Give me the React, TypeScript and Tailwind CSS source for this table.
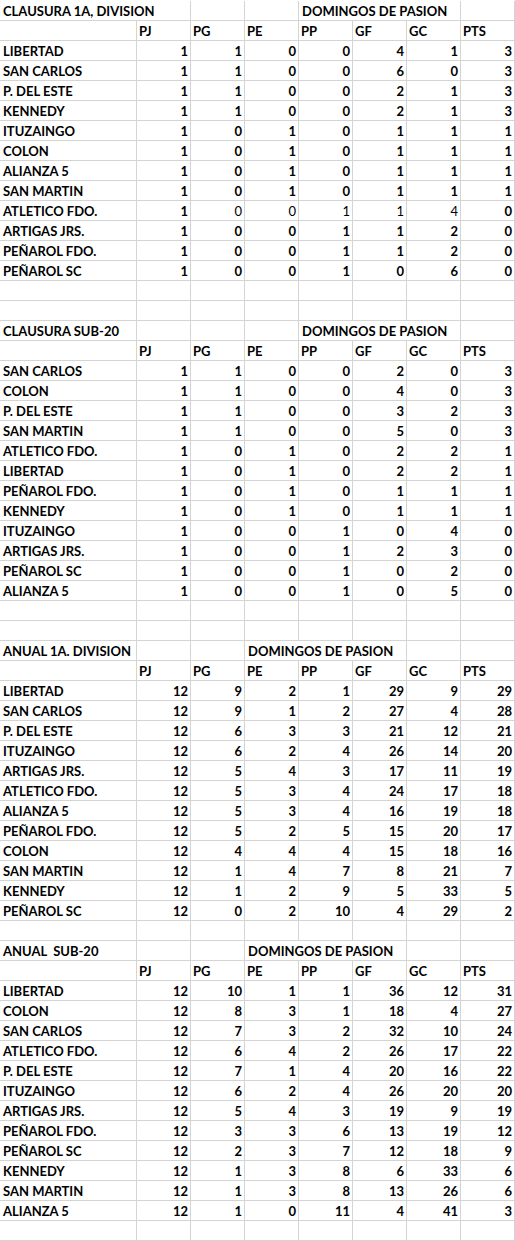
import React from "react";

type TeamRow = { name: string; v: number[]; light?: number[] };

const t1: TeamRow[] = [
  { name: "LIBERTAD", v: [1, 1, 0, 0, 4, 1, 3] },
  { name: "SAN CARLOS", v: [1, 1, 0, 0, 6, 0, 3] },
  { name: "P. DEL ESTE", v: [1, 1, 0, 0, 2, 1, 3] },
  { name: "KENNEDY", v: [1, 1, 0, 0, 2, 1, 3] },
  { name: "ITUZAINGO", v: [1, 0, 1, 0, 1, 1, 1] },
  { name: "COLON", v: [1, 0, 1, 0, 1, 1, 1] },
  { name: "ALIANZA 5", v: [1, 0, 1, 0, 1, 1, 1] },
  { name: "SAN MARTIN", v: [1, 0, 1, 0, 1, 1, 1] },
  { name: "ATLETICO FDO.", v: [1, 0, 0, 1, 1, 4, 0], light: [1, 2, 3, 4, 5] },
  { name: "ARTIGAS JRS.", v: [1, 0, 0, 1, 1, 2, 0] },
  { name: "PEÑAROL FDO.", v: [1, 0, 0, 1, 1, 2, 0] },
  { name: "PEÑAROL SC", v: [1, 0, 0, 1, 0, 6, 0] },
];

const t2: TeamRow[] = [
  { name: "SAN CARLOS", v: [1, 1, 0, 0, 2, 0, 3] },
  { name: "COLON", v: [1, 1, 0, 0, 4, 0, 3] },
  { name: "P. DEL ESTE", v: [1, 1, 0, 0, 3, 2, 3] },
  { name: "SAN MARTIN", v: [1, 1, 0, 0, 5, 0, 3] },
  { name: "ATLETICO FDO.", v: [1, 0, 1, 0, 2, 2, 1] },
  { name: "LIBERTAD", v: [1, 0, 1, 0, 2, 2, 1] },
  { name: "PEÑAROL FDO.", v: [1, 0, 1, 0, 1, 1, 1] },
  { name: "KENNEDY", v: [1, 0, 1, 0, 1, 1, 1] },
  { name: "ITUZAINGO", v: [1, 0, 0, 1, 0, 4, 0] },
  { name: "ARTIGAS JRS.", v: [1, 0, 0, 1, 2, 3, 0] },
  { name: "PEÑAROL SC", v: [1, 0, 0, 1, 0, 2, 0] },
  { name: "ALIANZA 5", v: [1, 0, 0, 1, 0, 5, 0] },
];

const t3: TeamRow[] = [
  { name: "LIBERTAD", v: [12, 9, 2, 1, 29, 9, 29] },
  { name: "SAN CARLOS", v: [12, 9, 1, 2, 27, 4, 28] },
  { name: "P. DEL ESTE", v: [12, 6, 3, 3, 21, 12, 21] },
  { name: "ITUZAINGO", v: [12, 6, 2, 4, 26, 14, 20] },
  { name: "ARTIGAS JRS.", v: [12, 5, 4, 3, 17, 11, 19] },
  { name: "ATLETICO FDO.", v: [12, 5, 3, 4, 24, 17, 18] },
  { name: "ALIANZA 5", v: [12, 5, 3, 4, 16, 19, 18] },
  { name: "PEÑAROL FDO.", v: [12, 5, 2, 5, 15, 20, 17] },
  { name: "COLON", v: [12, 4, 4, 4, 15, 18, 16] },
  { name: "SAN MARTIN", v: [12, 1, 4, 7, 8, 21, 7] },
  { name: "KENNEDY", v: [12, 1, 2, 9, 5, 33, 5] },
  { name: "PEÑAROL SC", v: [12, 0, 2, 10, 4, 29, 2] },
];

const t4: TeamRow[] = [
  { name: "LIBERTAD", v: [12, 10, 1, 1, 36, 12, 31] },
  { name: "COLON", v: [12, 8, 3, 1, 18, 4, 27] },
  { name: "SAN CARLOS", v: [12, 7, 3, 2, 32, 10, 24] },
  { name: "ATLETICO FDO.", v: [12, 6, 4, 2, 26, 17, 22] },
  { name: "P. DEL ESTE", v: [12, 7, 1, 4, 20, 16, 22] },
  { name: "ITUZAINGO", v: [12, 6, 2, 4, 26, 20, 20] },
  { name: "ARTIGAS JRS.", v: [12, 5, 4, 3, 19, 9, 19] },
  { name: "PEÑAROL FDO.", v: [12, 3, 3, 6, 13, 19, 12] },
  { name: "PEÑAROL SC", v: [12, 2, 3, 7, 12, 18, 9] },
  { name: "KENNEDY", v: [12, 1, 3, 8, 6, 33, 6] },
  { name: "SAN MARTIN", v: [12, 1, 3, 8, 13, 26, 6] },
  { name: "ALIANZA 5", v: [12, 1, 0, 11, 4, 41, 3] },
];

const heads = ["PJ", "PG", "PE", "PP", "GF", "GC", "PTS"];

const cell =
  "h-[20px] border-r border-b border-[#d4d4d4] whitespace-pre overflow-visible leading-[19px] pt-[1px]";

function Cell({
  children,
  className = "",
}: {
  children?: React.ReactNode;
  className?: string;
}) {
  return <div className={`${cell} ${className}`}>{children}</div>;
}

function EmptyRow() {
  return (
    <>
      {Array.from({ length: 8 }).map((_, i) => (
        <Cell key={i} />
      ))}
    </>
  );
}

function TitleRow({
  title,
  wideTitle,
  domCol,
}: {
  title: string;
  wideTitle?: boolean;
  domCol: 3 | 4;
}) {
  const cells: React.ReactNode[] = [];
  if (wideTitle) {
    cells.push(
      <Cell key="t" className="col-span-2 pl-[3px]">
        {title}
      </Cell>
    );
  } else {
    cells.push(
      <Cell key="t" className="pl-[3px]">
        {title}
      </Cell>
    );
    cells.push(<Cell key="c1" />);
  }
  cells.push(<Cell key="c2" />);
  if (domCol === 4) {
    cells.push(<Cell key="c3" />);
    cells.push(
      <Cell key="d" className="col-span-3 pl-[3px]">
        DOMINGOS DE PASION
      </Cell>
    );
    cells.push(<Cell key="c7" />);
  } else {
    cells.push(
      <Cell key="d" className="col-span-3 pl-[3px]">
        DOMINGOS DE PASION
      </Cell>
    );
    cells.push(<Cell key="c6" />);
    cells.push(<Cell key="c7" />);
  }
  return <>{cells}</>;
}

function HeadRow() {
  return (
    <>
      <Cell />
      {heads.map((h) => (
        <Cell key={h} className="pl-[2px]">
          {h}
        </Cell>
      ))}
    </>
  );
}

function Team({ r }: { r: TeamRow }) {
  return (
    <>
      <Cell className="pl-[3px]">{r.name}</Cell>
      {r.v.map((n, i) => (
        <Cell
          key={i}
          className={`text-right pr-[2px] ${
            r.light && r.light.includes(i) ? "font-normal" : ""
          }`}
        >
          {n}
        </Cell>
      ))}
    </>
  );
}

function Block({ rows }: { rows: TeamRow[] }) {
  return (
    <>
      {rows.map((r, i) => (
        <Team key={i} r={r} />
      ))}
    </>
  );
}

export default function App() {
  return (
    <div className="w-[515px] h-[1241px] bg-white pt-px overflow-hidden text-black">
      <div className="grid grid-cols-[137px_repeat(7,54px)] font-['Lato',sans-serif] text-[13px] font-bold">
        <TitleRow title="CLAUSURA 1A, DIVISION" wideTitle domCol={4} />
        <HeadRow />
        <Block rows={t1} />
        <EmptyRow />
        <EmptyRow />
        <TitleRow title="CLAUSURA SUB-20" domCol={4} />
        <HeadRow />
        <Block rows={t2} />
        <EmptyRow />
        <EmptyRow />
        <TitleRow title="ANUAL 1A. DIVISION" domCol={3} />
        <HeadRow />
        <Block rows={t3} />
        <EmptyRow />
        <TitleRow title="ANUAL  SUB-20" domCol={3} />
        <HeadRow />
        <Block rows={t4} />
        <EmptyRow />
      </div>
    </div>
  );
}
